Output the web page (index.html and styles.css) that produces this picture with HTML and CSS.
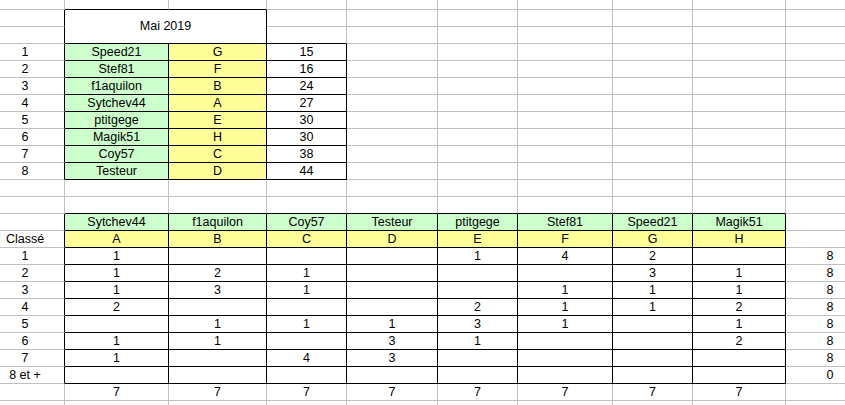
FILE: index.html
```html
<!DOCTYPE html>
<html lang="fr">
<head>
<meta charset="utf-8">
<title>Mai 2019</title>
<link rel="stylesheet" href="styles.css">
</head>
<body>
<div class="sheet">
  <!-- R0 -->
  <div></div><div class="b"></div><div class="b"></div><div></div><div></div><div></div><div></div><div></div><div></div><div></div>
  <!-- R1 -->
  <div class="r"></div><div class="mai">Mai 2019</div><div></div><div></div><div></div><div></div><div></div><div></div><div></div>
  <!-- R2 -->
  <div class="r"></div><div class="b"></div><div></div><div></div><div></div><div></div><div></div><div></div>
  <!-- R3-R10 -->
  <div class="h r">1</div><div class="k g">Speed21</div><div class="k y">G</div><div class="k">15</div><div></div><div></div><div></div><div></div><div></div><div></div>
  <div class="h r">2</div><div class="k g">Stef81</div><div class="k y">F</div><div class="k">16</div><div></div><div></div><div></div><div></div><div></div><div></div>
  <div class="h r">3</div><div class="k g">f1aquilon</div><div class="k y">B</div><div class="k">24</div><div></div><div></div><div></div><div></div><div></div><div></div>
  <div class="h r">4</div><div class="k g">Sytchev44</div><div class="k y">A</div><div class="k">27</div><div></div><div></div><div></div><div></div><div></div><div></div>
  <div class="h r">5</div><div class="k g">ptitgege</div><div class="k y">E</div><div class="k">30</div><div></div><div></div><div></div><div></div><div></div><div></div>
  <div class="h r">6</div><div class="k g">Magik51</div><div class="k y">H</div><div class="k">30</div><div></div><div></div><div></div><div></div><div></div><div></div>
  <div class="h r">7</div><div class="k g">Coy57</div><div class="k y">C</div><div class="k">38</div><div></div><div></div><div></div><div></div><div></div><div></div>
  <div class="h r">8</div><div class="k g">Testeur</div><div class="k y">D</div><div class="k">44</div><div></div><div></div><div></div><div></div><div></div><div></div>
  <!-- R11 -->
  <div></div><div></div><div></div><div></div><div></div><div></div><div></div><div></div><div></div><div></div>
  <!-- R12 -->
  <div></div><div class="b"></div><div class="b"></div><div class="b"></div><div class="b"></div><div class="b"></div><div class="b"></div><div class="b"></div><div class="b"></div><div></div>
  <!-- R13 -->
  <div class="r"></div><div class="k g">Sytchev44</div><div class="k g">f1aquilon</div><div class="k g">Coy57</div><div class="k g">Testeur</div><div class="k g">ptitgege</div><div class="k g">Stef81</div><div class="k g">Speed21</div><div class="k g">Magik51</div><div></div>
  <!-- R14 -->
  <div class="h r">Classé</div><div class="k y">A</div><div class="k y">B</div><div class="k y">C</div><div class="k y">D</div><div class="k y">E</div><div class="k y">F</div><div class="k y">G</div><div class="k y">H</div><div></div>
  <!-- R15-R22 -->
  <div class="h r">1</div><div class="k">1</div><div class="k"></div><div class="k"></div><div class="k"></div><div class="k">1</div><div class="k">4</div><div class="k">2</div><div class="k"></div><div>8</div>
  <div class="h r">2</div><div class="k">1</div><div class="k">2</div><div class="k">1</div><div class="k"></div><div class="k"></div><div class="k"></div><div class="k">3</div><div class="k">1</div><div>8</div>
  <div class="h r">3</div><div class="k">1</div><div class="k">3</div><div class="k">1</div><div class="k"></div><div class="k"></div><div class="k">1</div><div class="k">1</div><div class="k">1</div><div>8</div>
  <div class="h r">4</div><div class="k">2</div><div class="k"></div><div class="k"></div><div class="k"></div><div class="k">2</div><div class="k">1</div><div class="k">1</div><div class="k">2</div><div>8</div>
  <div class="h r">5</div><div class="k"></div><div class="k">1</div><div class="k">1</div><div class="k">1</div><div class="k">3</div><div class="k">1</div><div class="k"></div><div class="k">1</div><div>8</div>
  <div class="h r">6</div><div class="k">1</div><div class="k">1</div><div class="k"></div><div class="k">3</div><div class="k">1</div><div class="k"></div><div class="k"></div><div class="k">2</div><div>8</div>
  <div class="h r">7</div><div class="k">1</div><div class="k"></div><div class="k">4</div><div class="k">3</div><div class="k"></div><div class="k"></div><div class="k"></div><div class="k"></div><div>8</div>
  <div class="h r">8 et +</div><div class="k"></div><div class="k"></div><div class="k"></div><div class="k"></div><div class="k"></div><div class="k"></div><div class="k"></div><div class="k"></div><div>0</div>
  <!-- R23 -->
  <div></div><div>7</div><div>7</div><div>7</div><div>7</div><div>7</div><div>7</div><div>7</div><div>7</div><div></div>
  <!-- R24 -->
  <div></div><div></div><div></div><div></div><div></div><div></div><div></div><div></div><div></div><div></div>
</div>
</body>
</html>
```
FILE: styles.css
```css
html, body {
  margin: 0;
  padding: 0;
  overflow: hidden;
  background: #ffffff;
}

.sheet {
  display: grid;
  grid-template-columns: 65px 104px 98px 80px 91px 80px 95px 80px 93px 89px;
  grid-template-rows: 10px repeat(24, 17px);
  width: 875px;
  font-family: "Liberation Sans", Arial, sans-serif;
  font-size: 12.5px;
  color: #000000;
}

.sheet > div {
  box-sizing: border-box;
  border-right: 1px solid #c0c0c0;
  border-bottom: 1px solid #c0c0c0;
  text-align: center;
  line-height: 16px;
  white-space: nowrap;
  overflow: hidden;
}

.sheet > .r { border-right-color: #000000; }
.sheet > .b { border-bottom-color: #000000; }
.sheet > .k {
  border-right-color: #000000;
  border-bottom-color: #000000;
}

.sheet > .h { padding-right: 14px; }

.sheet > .g { background: #ccffcc; }
.sheet > .y { background: #ffff99; }

.sheet > .mai {
  grid-column: span 2;
  grid-row: span 2;
  border-right-color: #000000;
  border-bottom-color: #000000;
  line-height: 33px;
}
```
